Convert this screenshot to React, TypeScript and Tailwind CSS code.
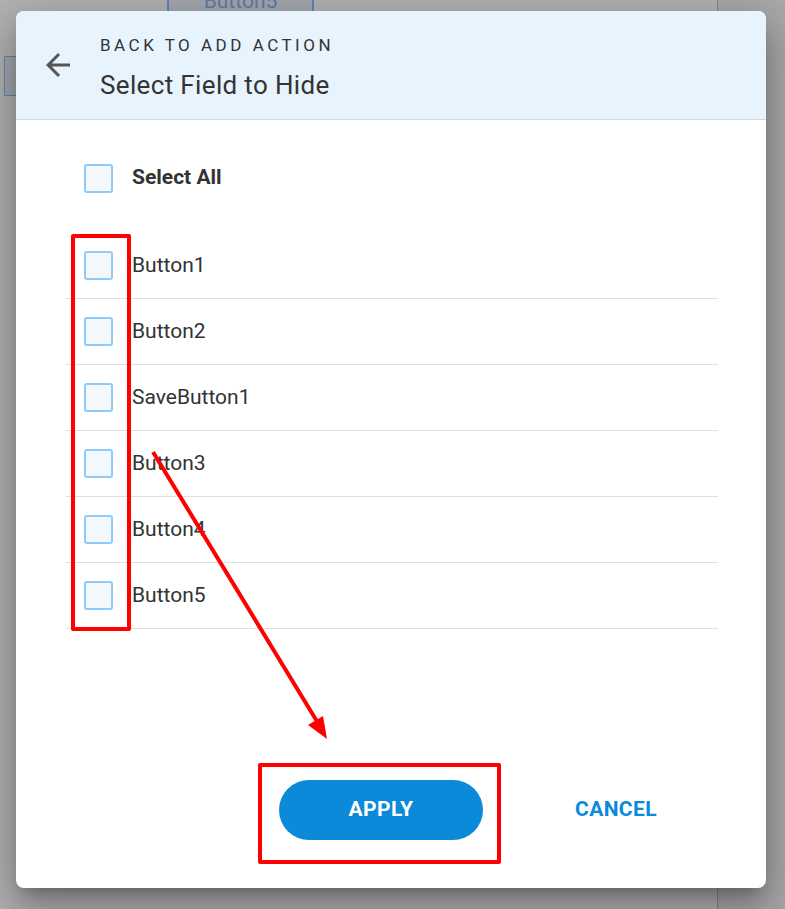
const items = ["Button1", "Button2", "SaveButton1", "Button3", "Button4", "Button5"];

const Box = () => (
  <span className="block w-[29px] h-[29px] shrink-0 rounded-[3px] border-2 border-[#90caf9] bg-[#f3f8fd]"></span>
);

const BackArrow = () => (
  <svg width="36" height="36" viewBox="0 0 24 24" className="shrink-0">
    <path fill="#555" d="M20 11H7.83l5.59-5.59L12 4l-8 8 8 8 1.41-1.41L7.83 13H20v-2z" />
  </svg>
);

const App = () => {
  return (
    <div
      className="relative w-[785px] h-[909px] overflow-hidden bg-[#b2b2b2]"
      style={{ fontFamily: "Roboto, 'Liberation Sans', sans-serif" }}
    >
      {/* page underneath the overlay */}
      <div className="absolute left-[717px] top-0 h-full w-[68px] bg-[#a9a9a9]"></div>
      <div className="absolute left-[717px] top-0 h-full w-px bg-[#8a8a8a]"></div>
      <div className="absolute left-[167px] top-[-16px] w-[147px] h-[36px] border-x-2 border-[#5d87b8] bg-[#a4a7ae] flex items-center justify-center text-[21px] text-[#5e7ea3]">
        Button5
      </div>
      <div className="absolute left-[4px] top-[56px] w-[20px] h-[40px] border border-[#5d87b8] bg-[#a4a7ae]"></div>

      {/* dialog */}
      <div className="relative ml-[16px] mt-[11px] w-[750px] h-[877px] rounded-[8px] bg-white overflow-hidden flex flex-col shadow-[0_11px_15px_-7px_rgba(0,0,0,0.25),0_24px_38px_3px_rgba(0,0,0,0.18),0_9px_46px_8px_rgba(0,0,0,0.14)]">
        <div className="h-[109px] shrink-0 bg-[#e8f4fd] border-b border-[#d0dbe4] flex items-center pl-[24px] gap-[24px]">
          <BackArrow />
          <div className="flex flex-col mt-[3px] text-[#333]">
            <span className="text-[17px] leading-[24px] tracking-[3.5px]">BACK TO ADD ACTION</span>
            <span className="text-[26px] leading-[32px] mt-[12px] tracking-[0.35px]">Select Field to Hide</span>
          </div>
        </div>

        <div className="flex-1 pt-[25px] ml-[50px] mr-[48px]">
          <div className="h-[66px] flex items-center pl-[18px] gap-[19px]">
            <Box />
            <span className="text-[21px] font-bold text-[#333]">Select All</span>
          </div>
          <div className="mt-[22px]">
            {items.map((name) => (
              <div
                key={name}
                className="h-[66px] flex items-center pl-[18px] gap-[19px] border-b border-[#e0e0e0]"
              >
                <Box />
                <span className="text-[21px] text-[#333]">{name}</span>
              </div>
            ))}
          </div>
        </div>

        <div className="flex justify-end gap-[31px] mr-[48px] mb-[48px]">
          <button className="w-[204px] h-[60px] rounded-full bg-[#0a8ad9] text-white text-[21px] font-bold tracking-[0.4px]">
            APPLY
          </button>
          <button className="w-[204px] h-[60px] rounded-full text-[#0a8ad9] text-[21px] font-bold tracking-[0.4px]">
            CANCEL
          </button>
        </div>
      </div>

      {/* annotations */}
      <div className="absolute left-[71px] top-[234px] w-[60px] h-[397px] border-[4px] border-[#ff0000] rounded-[2px]"></div>
      <div className="absolute left-[258px] top-[763px] w-[243px] h-[101px] border-[4px] border-[#ff0000] rounded-[2px]"></div>
      <svg className="absolute left-0 top-0" width="785" height="909">
        <line x1="153" y1="452" x2="318" y2="723" stroke="#ff0000" strokeWidth="4" />
        <polygon points="327,739 308,725 323,716" fill="#ff0000" />
      </svg>
    </div>
  );
};

export default App;
